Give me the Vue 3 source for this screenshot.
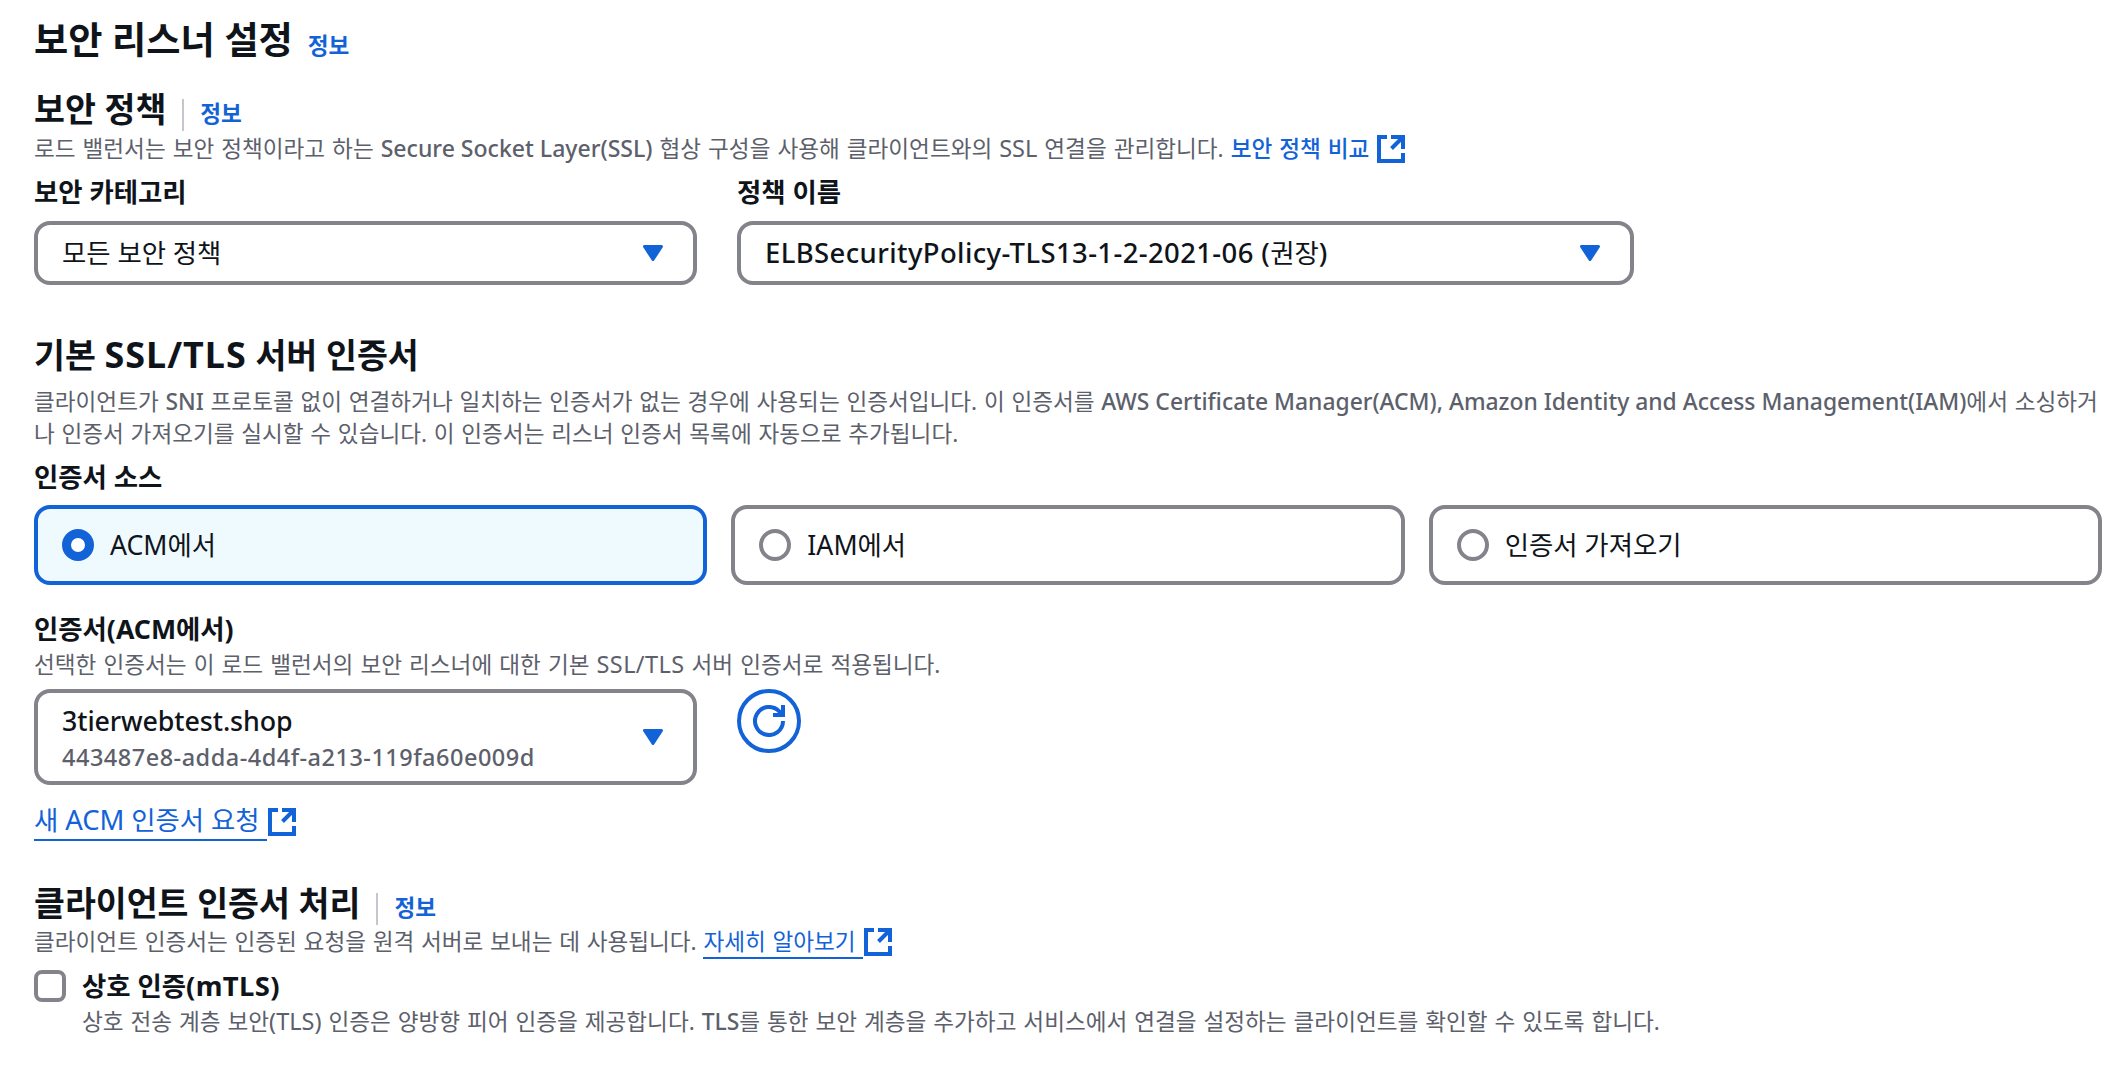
<script setup>
import { ref } from 'vue'

const source = ref('acm')
const mtls = ref(false)

const sources = [
  { id: 'acm', en: 'ACM', label: '에서' },
  { id: 'iam', en: 'IAM', label: '에서' },
  { id: 'import', en: '', label: '인증서 가져오기' }
]
</script>

<template>
  <main class="panel">
    <header class="panel-head">
      <h1>보안 리스너 설정</h1>
      <a class="info">정보</a>
    </header>

    <!-- 보안 정책 -->
    <section class="policy">
      <div class="head">
        <h2>보안 정책</h2>
        <span class="divider"></span>
        <a class="info">정보</a>
      </div>
      <p class="desc d-policy">
        로드 밸런서는 보안 정책이라고 하는 <b class="en">Secure Socket Layer(SSL)</b> 협상 구성을 사용해 클라이언트와의 <span class="en">SSL</span> 연결을 관리합니다. <a class="link compare">보안 정책 비교<svg class="ext" viewBox="0 0 28 28"><path d="M10 2H2V26H26V18M14 2H26V14M25 3L14.5 13.5" /></svg></a>
      </p>
      <div class="row">
        <div class="field category">
          <label>보안 카테고리</label>
          <button class="select">
            <span>모든 보안 정책</span>
            <svg class="caret" viewBox="0 0 20 16"><path d="M1.5 1.5H18.5L10 14.5Z" /></svg>
          </button>
        </div>
        <div class="field name">
          <label>정책 이름</label>
          <button class="select">
            <span><span class="en wide">ELBSecurityPolicy-TLS13-1-2-2021-06 (</span>권장<span class="en">)</span></span>
            <svg class="caret" viewBox="0 0 20 16"><path d="M1.5 1.5H18.5L10 14.5Z" /></svg>
          </button>
        </div>
      </div>
    </section>

    <!-- 서버 인증서 -->
    <section class="cert">
      <h2>기본 <span class="en">SSL/TLS</span> 서버 인증서</h2>
      <p class="desc d-cert">
        <span class="line">클라이언트가 <b class="en">SNI</b> 프로토콜 없이 연결하거나 일치하는 인증서가 없는 경우에 사용되는 인증서입니다. 이 인증서를 <b class="en">AWS Certificate Manager(ACM), Amazon Identity and Access Management(IAM)</b>에서 소싱하거</span>
        <span class="line">나 인증서 가져오기를 실시할 수 있습니다. 이 인증서는 리스너 인증서 목록에 자동으로 추가됩니다.</span>
      </p>
      <label>인증서 소스</label>
      <div class="tiles">
        <div
          v-for="s in sources"
          :key="s.id"
          :class="['tile', { active: source === s.id }]"
          @click="source = s.id"
        >
          <span class="radio"></span>
          <span><span class="en">{{ s.en }}</span>{{ s.label }}</span>
        </div>
      </div>

      <label class="acm-label">인증서<span class="en">(ACM</span>에서<span class="en">)</span></label>
      <p class="desc d-acm">선택한 인증서는 이 로드 밸런서의 보안 리스너에 대한 기본 <span class="en wide">SSL/TLS</span> 서버 인증서로 적용됩니다.</p>
      <div class="row">
        <button class="select tall category">
          <span class="option">
            <span class="domain">3tierwebtest.shop</span>
            <span class="arn">443487e8-adda-4d4f-a213-119fa60e009d</span>
          </span>
          <svg class="caret" viewBox="0 0 20 16"><path d="M1.5 1.5H18.5L10 14.5Z" /></svg>
        </button>
        <button class="refresh">
          <svg viewBox="0 0 32 32"><path d="M30 16A14 14 0 1 1 26 6.2L29 9.5M30 0V10H20" /></svg>
        </button>
      </div>
      <a class="link request"><u>새 <span class="en">ACM</span> 인증서 요청</u><svg class="ext" viewBox="0 0 28 28"><path d="M10 2H2V26H26V18M14 2H26V14M25 3L14.5 13.5" /></svg></a>
    </section>

    <!-- 클라이언트 인증서 -->
    <section class="client">
      <div class="head">
        <h2>클라이언트 인증서 처리</h2>
        <span class="divider"></span>
        <a class="info">정보</a>
      </div>
      <p class="desc d-client">
        클라이언트 인증서는 인증된 요청을 원격 서버로 보내는 데 사용됩니다. <a class="link"><u>자세히 알아보기</u><svg class="ext" viewBox="0 0 28 28"><path d="M10 2H2V26H26V18M14 2H26V14M25 3L14.5 13.5" /></svg></a>
      </p>
      <div class="check" @click="mtls = !mtls">
        <span :class="['box', { on: mtls }]"></span>
        <div>
          <label>상호 인증<span class="en wide">(mTLS)</span></label>
          <p class="desc d-mtls">상호 전송 계층 보안<span class="en">(TLS)</span> 인증은 양방향 피어 인증을 제공합니다. <b class="en">TLS</b>를 통한 보안 계층을 추가하고 서비스에서 연결을 설정하는 클라이언트를 확인할 수 있도록 합니다.</p>
        </div>
      </div>
    </section>
  </main>
</template>

<style>
body {
  margin: 0;
  background: #fff;
}
</style>

<style scoped>
.panel {
  box-sizing: border-box;
  width: 2122px;
  height: 1072px;
  padding: 16px 20px 0 34px;
  overflow: hidden;
  font-family: 'Noto Sans', 'Noto Sans CJK KR', sans-serif;
  font-size: 26.4px;
  line-height: 40px;
  color: #0f141a;
  white-space: nowrap;
}

h1, h2, p {
  margin: 0;
}
h1 {
  font-size: 37.2px;
  line-height: 48px;
  font-weight: 700;
}
h2 {
  font-size: 33.6px;
  line-height: 44px;
  font-weight: 700;
}
label {
  display: block;
  font-size: 26.4px;
  line-height: 40px;
  font-weight: 700;
}
.en {
  font-size: 1.04em;
  line-height: 1;
}
.en.wide {
  letter-spacing: 0.4px;
}
b.en {
  font-size: 1.012em;
  font-weight: 500;
  word-spacing: 0;
}
h2 .en {
  font-size: 1.07em;
  letter-spacing: 1px;
}

/* ── 제목 ── */
.panel-head {
  display: flex;
  align-items: baseline;
  gap: 15px;
}
.head {
  display: flex;
  align-items: baseline;
}
.info {
  font-size: 22.6px;
  line-height: 32px;
  font-weight: 700;
  color: #1262d8;
}
.divider {
  align-self: flex-end;
  width: 2px;
  height: 32px;
  margin: 0 16px;
  background: #c6c6cd;
}

/* ── 설명 ── */
.desc {
  font-size: 22.6px;
  line-height: 32px;
  word-spacing: 0.85px;
  color: #5c606b;
}
.d-policy {
  margin-top: 2px;
  word-spacing: 1.1px;
}
.d-policy b.en {
  font-size: 1.02em;
}
.d-acm {
  word-spacing: 1.2px;
}
.d-mtls {
  word-spacing: 1.05px;
}
.line {
  display: block;
}
.link {
  color: #1262d8;
}
.compare {
  font-weight: 500;
}
.link u {
  display: inline-block;
  padding-right: 7px;
  text-decoration: none;
  box-shadow: inset 0 -1px 0 #1262d8, 0 1px 0 #1262d8;
}
.ext {
  width: 28px;
  height: 28px;
  margin-left: 8px;
  vertical-align: -6px;
  fill: none;
  stroke: #1262d8;
  stroke-width: 4;
}
u + .ext {
  margin-left: 1px;
}

/* ── 입력 ── */
.row {
  display: flex;
  align-items: flex-start;
  gap: 40px;
}
.category {
  width: 663px;
}
.name {
  width: 897px;
}
.select {
  box-sizing: border-box;
  display: flex;
  align-items: center;
  justify-content: space-between;
  width: 100%;
  height: 64px;
  padding: 0 30px 0 24px;
  border: 4px solid #83838b;
  border-radius: 16px;
  background: #fff;
  font: inherit;
  color: inherit;
  text-align: left;
}
.select .en {
  font-weight: 500;
}
.select.tall {
  width: 663px;
  height: 96px;
}
.caret {
  width: 20px;
  height: 16px;
  fill: #1262d8;
  stroke: #1262d8;
  stroke-width: 3;
  stroke-linejoin: round;
}
.option {
  display: flex;
  flex-direction: column;
}
.domain {
  font-size: 26.8px;
  line-height: 40px;
  font-weight: 500;
  letter-spacing: -0.1px;
}
.arn {
  font-size: 23.5px;
  line-height: 32px;
  font-weight: 500;
  letter-spacing: 0.5px;
  color: #5c606b;
}

.policy {
  margin-top: 23px;
}
.policy .row {
  margin-top: 7px;
}
.field .select {
  margin-top: 9px;
}

/* ── 인증서 소스 ── */
.cert {
  margin-top: 48px;
}
.d-cert {
  margin-top: 9px;
}
.cert > label {
  margin-top: 7px;
}
.tiles {
  display: grid;
  grid-template-columns: repeat(3, 1fr);
  gap: 24px;
  margin-top: 8px;
}
.tile {
  box-sizing: border-box;
  display: flex;
  align-items: center;
  gap: 16px;
  height: 80px;
  padding: 0 24px;
  border: 4px solid #83838b;
  border-radius: 16px;
}
.tile .en {
  font-size: 1.01em;
}
.tile.active {
  border-color: #1262d8;
  background: #effaff;
}
.radio {
  box-sizing: border-box;
  width: 32px;
  height: 32px;
  border: 4px solid #83838b;
  border-radius: 50%;
  background: #fff;
}
.active .radio {
  border: 9.5px solid #1262d8;
}
.cert > .acm-label {
  margin-top: 24px;
}
.acm-label .en {
  font-size: 1.01em;
}
.cert > .row {
  margin-top: 8px;
}
.refresh {
  box-sizing: border-box;
  display: grid;
  place-items: center;
  width: 64px;
  height: 64px;
  padding: 0;
  border: 4px solid #1262d8;
  border-radius: 50%;
  background: #fff;
}
.refresh svg {
  width: 32px;
  height: 32px;
  fill: none;
  stroke: #1262d8;
  stroke-width: 4;
}
.request {
  display: block;
  margin-top: 15px;
}

/* ── 클라이언트 인증서 ── */
.client {
  margin-top: 41px;
}
.d-client {
  margin-top: 1px;
}
.check {
  display: flex;
  gap: 16px;
  margin-top: 8px;
}
.box {
  box-sizing: border-box;
  flex: none;
  width: 32px;
  height: 32px;
  margin-top: 4px;
  border: 4px solid #83838b;
  border-radius: 8px;
}
.box.on {
  background: #1262d8;
}
</style>
